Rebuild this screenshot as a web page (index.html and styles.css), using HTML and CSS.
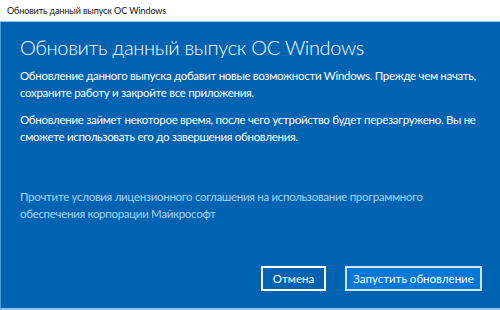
FILE: index.html
```html
<!DOCTYPE html>
<html lang="ru">
<head>
  <meta charset="UTF-8">
  <title>Обновить данный выпуск ОС Windows</title>
  <link rel="stylesheet" href="styles.css">
</head>
<body>
  <div class="window">
    <div class="titlebar">Обновить данный выпуск ОС Windows</div>
    <div class="dialog">
      <h1>Обновить данный выпуск ОС Windows</h1>
      <p>Обновление данного выпуска добавит новые возможности Windows. Прежде чем начать, сохраните работу и закройте все приложения.</p>
      <p>Обновление займет некоторое время, после чего устройство будет перезагружено. Вы не сможете использовать его до завершения обновления.</p>
      <a class="license" href="#">Прочтите условия лицензионного соглашения на использование программного обеспечения корпорации Майкрософт</a>
      <div class="actions">
        <button class="btn">Отмена</button>
        <button class="btn btn-primary">Запустить обновление</button>
      </div>
    </div>
  </div>
</body>
</html>
```

FILE: styles.css
```css
html, body {
  margin: 0; padding: 0;
  width: 500px; height: 310px;
  overflow: hidden;
  font-family: 'Lato', 'Noto Sans', Arial, sans-serif;
}
.window {
  display: flex;
  flex-direction: column;
  height: 310px;
}
.titlebar {
  height: 22px;
  line-height: 21px;
  padding-left: 7px;
  font-size: 9px;
  letter-spacing: -0.1px;
  color: #111;
  background: #fff;
  border-bottom: 1px solid #8cc1ea;
  box-sizing: border-box;
}
.dialog {
  flex: 1;
  display: flex;
  flex-direction: column;
  background: #0063b1;
  color: #fff;
  border-left: 1px solid #4b9be0;
  border-bottom: 2px solid #8cc4f0;
  padding: 11px 16px 17px 19px;
}
.dialog h1 {
  margin: 0 0 6px 0;
  font-size: 20px;
  font-weight: 300;
  letter-spacing: -0.35px;
  line-height: 28px;
}
.dialog p {
  margin: 0 0 10px 0;
  font-size: 11.5px;
  letter-spacing: -0.3px;
  line-height: 17px;
}
.license {
  margin-top: 33px;
  font-size: 11.5px;
  letter-spacing: -0.3px;
  line-height: 17px;
  color: #a9d3f5;
  text-decoration: none;
}
.actions {
  margin-top: auto;
  margin-right: 2px;
  display: flex;
  justify-content: flex-end;
  gap: 19px;
}
.btn {
  height: 25px;
  width: 65px;
  padding: 0;
  font-family: inherit;
  font-size: 11.5px;
  color: #fff;
  background: #0063b1;
  border: 2px solid #fff;
}
.btn-primary {
  width: 137px;
  background: #0078d7;
  border-color: #cfe5f7;
}
```
